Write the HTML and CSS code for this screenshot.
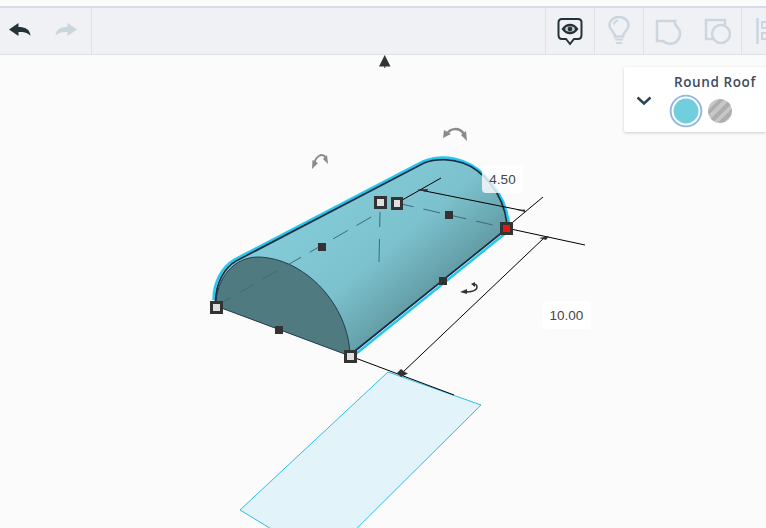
FILE: index.html
```html
<!doctype html>
<html lang="en">
<head>
    <meta charset="UTF-8">
    <title>Round Roof</title>
    <link rel="stylesheet" href="styles.css">
</head>
<body>
<div class="topstrip"></div>
<div class="toolbar">
    <div class="history">
        <svg class="hist_icon" width="24" height="18" viewBox="0 0 24 18">
            <path class="dark" d="M1 7.500 L10.500 1 V5 C17 5 22 7 22.500 14 C20 10.500 16 10 10.500 10 V14 Z"></path>
        </svg>
        <svg class="hist_icon" width="24" height="18" viewBox="0 0 24 18">
            <path class="pale" d="M23 7.500 L13.500 1 V5 C7 5 2 7 1.500 14 C4 10.500 8 10 13.500 10 V14 Z"></path>
        </svg>
    </div>
    <div class="tools">
        <div class="tool">
            <svg width="28" height="30" viewBox="0 0 28 30">
                <path class="line_dark" d="M6 3 H22 Q25.500 3 25.500 6.500 V19 Q25.500 23 22 23 H18 L14 28 L10 23 H6 Q2.500 23 2.500 19 V6.500 Q2.500 3 6 3 Z"></path>
                <path class="dark" d="M5.500 13 C10 6 18 6 22.500 13 C18 20 10 20 5.500 13 Z"></path>
                <ellipse class="eye_white" cx="14" cy="13" rx="4.800" ry="2.800"></ellipse>
                <circle class="dark" cx="14" cy="13" r="2.300"></circle>
            </svg>
        </div>
        <div class="tool">
            <svg width="24" height="32" viewBox="0 0 24 32">
                <path class="line_pale" d="M8 21.500 C8 17 2.500 15 2.500 10.500 C2.500 5 7 2 12 2 C17 2 21.500 5 21.500 10.500 C21.500 15 16 17 16 21.500 Z"></path>
                <path class="line_pale thin" d="M8 24.500 H16 M9 28 H15"></path>
                <path class="line_pale thin" d="M7 9.500 C7 7.500 9 5.500 11 5.500"></path>
            </svg>
        </div>
        <div class="tool">
            <svg width="28" height="28" viewBox="0 0 28 28">
                <path class="line_pale" d="M3 4 H21 C20 7 22 9 24 11 C27 14 27 21 22 25 C18 28 12 27 9 24 H3 Z"></path>
            </svg>
        </div>
        <div class="tool tool_plain">
            <svg width="28" height="28" viewBox="0 0 28 28">
                <path class="line_pale" d="M10 22 H3 V3 H22 V8"></path>
                <circle class="line_pale" cx="18" cy="17" r="9"></circle>
            </svg>
        </div>
        <div class="tool tool_cut">
            <svg width="10" height="28" viewBox="0 0 10 28">
                <path class="line_pale" d="M1.500 1 V27"></path>
                <path class="line_pale thin" d="M6 5 H11 V11 H6 Z M6 16 H11 V22 H6 Z"></path>
            </svg>
        </div>
    </div>
</div>

<div class="canvas">
    <svg class="scene" width="766" height="473" viewBox="0 55 766 473">
        <defs>
            <linearGradient id="roof" gradientUnits="userSpaceOnUse" x1="310" y1="190" x2="420" y2="320">
                <stop offset="0" stop-color="#84ccd9"></stop>
                <stop offset="0.550" stop-color="#7cc2ce"></stop>
                <stop offset="1" stop-color="#5d949d"></stop>
            </linearGradient>
        </defs>

        <!-- workplane -->
        <polygon class="plane" points="388,372 481,405 324,561 240,510"></polygon>

        <!-- compass cone -->
        <path class="cone" d="M384.700 55 L390.500 66.500 H385.300 V68 H384.300 V66.500 H379 Z"></path>

        <!-- shape -->
        <path class="roof" d="M216 306 C216 283 224 268 236 261 L424 163 C437 158 452 159 463 163 C480 169 503 190 507 228 L350 356 Z" fill="url(#roof)"></path>
        <path class="front" d="M216 306 C216 278 234 257 258 257 C305 258 349 305 350 356 Z"></path>
        <path class="outline_blue" d="M213.500 300 C213.500 282 222 267 234.500 259.500 L423 161.500 C437 156 452 157 463.500 161.500 C481 168 505 190 509 224"></path>
        <path class="outline_blue" d="M352 357 L507 232"></path>
        <path class="outline_dark" d="M215.500 301 C216 283 224 268 236 261 L424 163 C437 158 452 159 463 163 C480 169 503 190 507 224"></path>
        <path class="outline_dark" d="M350 355 L504 231"></path>

        <!-- dashed centre lines -->
        <path class="dashed" d="M216 306 L380 212 M397 203 L506 228"></path>
        <path class="dashed dashed_v" d="M380 212 L379 262"></path>

        <!-- dimensions -->
        <path class="dim" d="M397 203 L441 178 M420 190 L525 211 M513 222 L543 197 M506 228 L585 245 M545 237 L402 373 M350 356 L454 395"></path>
        <path class="dim_head" d="M417 189.500 L428 189 L427 192 Z M517 210 L525 209.500 L525 212 Z M539 238 L549 236 L546 240 Z M397 373 L401 369 L405 372 L408 373.500 L405 375 L401 377 Z"></path>

        <!-- rotate arrows -->
        <path class="rot_gray" d="M314 164 C316 156 322 152 326 158"></path>
        <path class="rot_head" d="M312 169 L312.500 160 L318 163 Z M323 159 L327 155 L328 164 Z"></path>
        <path class="rot_gray rot_big" d="M447 134 C450 128 459 127 464 134"></path>
        <path class="rot_head" d="M443 138 L444 130 L451 134 Z M461 135 L466 131 L467 141 Z"></path>
        <path class="rot_dark" d="M464 292 C471 292 477 291 477 287 C477 285 475 284 473 284"></path>
        <path class="rot_headd" d="M460 292 L467 289 L467 294 Z M471 284 L475 282 L475 287 Z"></path>

        <!-- handles -->
        <rect class="dot" x="318" y="243" width="8" height="8"></rect>
        <rect class="dot" x="445" y="211" width="8" height="8"></rect>
        <rect class="dot" x="275" y="326" width="8" height="8"></rect>
        <rect class="dot" x="439" y="277" width="8" height="8"></rect>
        <rect class="grip" x="375.500" y="197.500" width="10" height="10"></rect>
        <rect class="grip" x="392.500" y="198.500" width="9" height="10"></rect>
        <rect class="grip" x="211.500" y="302.500" width="10" height="10"></rect>
        <rect class="grip" x="345.500" y="351.500" width="10" height="10"></rect>
        <rect class="grip grip_red" x="501.500" y="223.500" width="10" height="10"></rect>
    </svg>

    <div class="dim_label label_h">4.50</div>
    <div class="dim_label label_l">10.00</div>

    <div class="panel">
        <svg class="chevron" width="16" height="10" viewBox="0 0 16 10">
            <path d="M1.500 1.500 L8 7.500 L14.500 1.500"></path>
        </svg>
        <div class="panel_body">
            <div class="panel_title">Round Roof</div>
            <div class="swatches">
                <div class="swatch_solid"></div>
                <div class="swatch_hole"></div>
            </div>
        </div>
    </div>
</div>
</body>
</html>
```
FILE: styles.css
```css
* {
    margin: 0;
    padding: 0;
    box-sizing: border-box;
}

body {
    width: 766px;
    height: 528px;
    overflow: hidden;
    display: flex;
    flex-direction: column;
    background: #fbfbfb;
    font-family: "Open Sans", sans-serif;
}

.topstrip {
    height: 6px;
    background: #fbfbfb;
}

.toolbar {
    height: 49px;
    display: flex;
    justify-content: space-between;
    background: #f0f1f4;
    border-top: 2px solid #d9dce6;
    border-bottom: 1px solid #e0e2e8;
}

.history {
    width: 92px;
    display: flex;
    align-items: center;
    gap: 22px;
    padding-left: 8px;
    border-right: 1px solid #dfe1e7;
}

.tools {
    display: flex;
}

.tool {
    width: 49px;
    display: flex;
    align-items: center;
    justify-content: center;
    border-left: 1px solid #dfe1e7;
}

.tool_plain {
    border-left: none;
}

.tool_cut {
    width: 25px;
    justify-content: flex-start;
    padding-left: 14px;
}

.dark {
    fill: #24333a;
}

.pale {
    fill: #c9d5df;
}

.eye_white {
    fill: #c4ccd1;
}

.line_dark {
    fill: none;
    stroke: #24333a;
    stroke-width: 2;
}

.line_pale {
    fill: none;
    stroke: #cbd6e0;
    stroke-width: 2.500;
}

.thin {
    stroke-width: 2;
}

.canvas {
    position: relative;
    flex: 1;
}

.scene {
    display: block;
}

.plane {
    fill: #e2f3f9;
    stroke: #2bbde8;
    stroke-width: 1;
}

.cone {
    fill: #333;
}

.front {
    fill: #4f7a80;
    stroke: #1d3f50;
    stroke-width: 1;
}

.outline_blue {
    fill: none;
    stroke: #22c8ee;
    stroke-width: 2.500;
}

.outline_dark {
    fill: none;
    stroke: #162d45;
    stroke-width: 1.800;
}

.dashed {
    fill: none;
    stroke: #3f6b76;
    stroke-width: 1;
    stroke-dasharray: 17 10;
}

.dashed_v {
    stroke-dasharray: 15 12 24;
}

.dim {
    fill: none;
    stroke: #000;
    stroke-width: 1;
}

.dim_head {
    fill: #333;
}

.rot_gray {
    fill: none;
    stroke: #8a8a8a;
    stroke-width: 2;
}

.rot_big {
    stroke-width: 2.500;
}

.rot_head {
    fill: #8a8a8a;
}

.rot_dark {
    fill: none;
    stroke: #333;
    stroke-width: 1.500;
}

.rot_headd {
    fill: #333;
}

.dot {
    fill: #333;
}

.grip {
    fill: #dfdfdf;
    stroke: #333;
    stroke-width: 3;
}

.grip_red {
    fill: #e01a0e;
}

.dim_label {
    position: absolute;
    display: flex;
    align-items: center;
    justify-content: center;
    border-radius: 4px;
    background: rgba(255, 255, 255, 0.8);
    color: #444;
    font-family: "Liberation Sans", sans-serif;
    font-size: 13.500px;
}

.label_h {
    left: 482px;
    top: 110px;
    width: 41px;
    height: 28px;
}

.label_l {
    left: 542px;
    top: 246px;
    width: 49px;
    height: 28px;
    background: #fff;
}

.panel {
    position: absolute;
    left: 624px;
    top: 12px;
    width: 142px;
    height: 65px;
    display: flex;
    gap: 22px;
    background: #fff;
    border-radius: 2px 0 0 2px;
    box-shadow: 0 1px 3px rgba(60, 70, 90, 0.25);
}

.chevron {
    flex: none;
    margin: 29px 0 0 12px;
}

.chevron path {
    fill: none;
    stroke: #2f4358;
    stroke-width: 2.500;
}

.panel_body {
    padding-top: 6px;
}

.panel_title {
    color: #3c4c60;
    font-size: 13.500px;
    font-weight: 600;
    letter-spacing: 0.6px;
    white-space: nowrap;
}

.swatches {
    display: flex;
    align-items: center;
    gap: 7px;
    margin: 5px 0 0 -3px;
}

.swatch_solid {
    width: 30px;
    height: 30px;
    border-radius: 50%;
    background: #70cfdf;
    border: 2px solid #fff;
    box-shadow: 0 0 0 2px #8fb6e4;
    transform: scale(0.96);
}

.swatch_hole {
    width: 24px;
    height: 24px;
    border-radius: 50%;
    background: repeating-linear-gradient(135deg, #aeaeae 0 4px, #c6c6c6 4px 8px);
}
```
